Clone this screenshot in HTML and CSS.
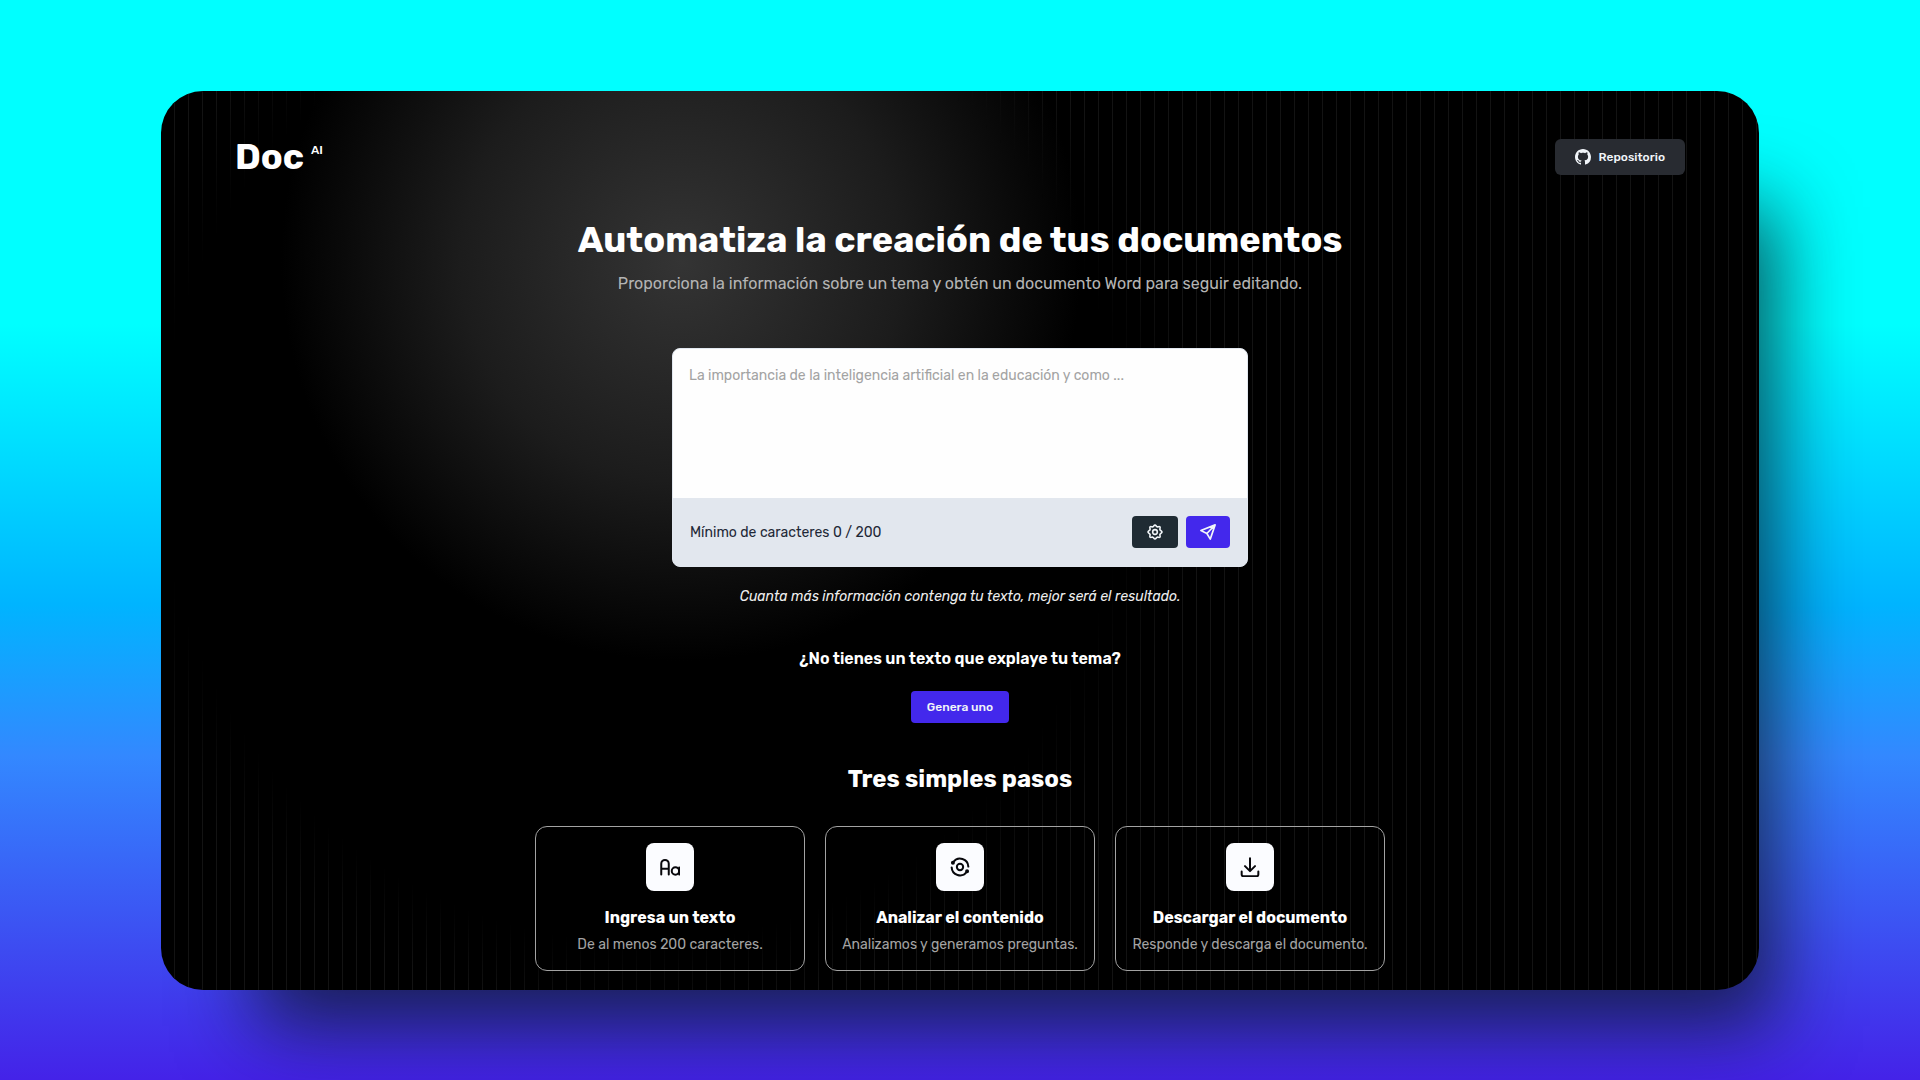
FILE: index.html
```html
<!DOCTYPE html>
<html lang="es">
<head>
<meta charset="utf-8">
<meta name="viewport" content="width=device-width, initial-scale=1">
<title>Doc AI</title>
<link rel="stylesheet" href="styles.css">
</head>
<body>
<div class="window">
  <header class="header">
    <a class="logo" href="#">Doc <sup class="logo-mark">AI</sup></a>
    <a class="repo" href="#">
      <svg class="repo-icon" viewBox="0 0 16 16" fill="currentColor" aria-hidden="true"><path d="M8 0C3.580 0 0 3.580 0 8c0 3.540 2.290 6.530 5.470 7.590.4.070.550-.170.550-.380 0-.190-.010-.820-.010-1.490-2.010.370-2.530-.490-2.690-.940-.090-.230-.480-.940-.820-1.130-.280-.150-.680-.520-.010-.530.630-.010 1.080.580 1.230.820.720 1.210 1.870.870 2.330.660.070-.520.280-.870.510-1.070-1.780-.2-3.640-.890-3.640-3.950 0-.870.310-1.590.820-2.150-.080-.2-.360-1.020.080-2.120 0 0 .670-.210 2.200.820.640-.180 1.320-.270 2-.270s1.360.090 2 .270c1.530-1.040 2.200-.820 2.200-.820.440 1.100.160 1.920.080 2.120.510.560.820 1.270.820 2.150 0 3.070-1.870 3.750-3.650 3.950.290.250.540.730.540 1.480 0 1.070-.010 1.930-.010 2.200 0 .210.150.460.550.380A8.010 8.010 0 0 0 16 8c0-4.420-3.580-8-8-8z"/></svg>
      Repositorio
    </a>
  </header>
  <main class="main">
    <h1 class="title">Automatiza la creación de tus documentos</h1>
    <p class="subtitle">Proporciona la información sobre un tema y obtén un documento Word para seguir editando.</p>
    <form class="composer">
      <textarea class="composer-text" aria-label="Texto" placeholder="La importancia de la inteligencia artificial en la educación y como ..."></textarea>
      <div class="composer-bar">
        <span class="composer-count">Mínimo de caracteres 0 / 200</span>
        <button class="button button-dark" type="button" aria-label="Ajustes">
          <svg class="icon-small" viewBox="0 0 24 24" fill="none" stroke="currentColor" stroke-width="2.400" stroke-linejoin="round" aria-hidden="true"><path d="M12 1.500c1.600 0 1.900 2.200 3.200 2.700s3.100-1.100 4.200 0-.5 2.900 0 4.200 3.100 2 3.100 3.600-2.600 2.300-3.100 3.600 1.100 3.100 0 4.200-2.900-.5-4.200 0-1.600 2.700-3.200 2.700-1.900-2.200-3.200-2.700-3.100 1.100-4.200 0 .5-2.900 0-4.200S1.500 13.600 1.500 12s2.600-2.300 3.100-3.600-1.100-3.100 0-4.200 2.900.5 4.200 0 1.600-2.700 3.200-2.700z"/><circle cx="12" cy="12" r="3.500"/></svg>
        </button>
        <button class="button button-primary" type="submit" aria-label="Enviar">
          <svg class="icon-large" viewBox="0 0 24 24" fill="none" stroke="currentColor" stroke-width="2.200" stroke-linecap="round" stroke-linejoin="round" aria-hidden="true"><path d="M21.500 2.500 2.500 10l8 4 4.500 7.500zM21.500 2.500 10.500 14"/></svg>
        </button>
      </div>
    </form>
    <p class="hint">Cuanta más información contenga tu texto, mejor será el resultado.</p>
    <h2 class="question">¿No tienes un texto que explaye tu tema?</h2>
    <button class="button button-primary button-generate" type="button">Genera uno</button>
    <h2 class="steps-title">Tres simples pasos</h2>
    <ul class="steps">
      <li class="step">
        <span class="step-icon"><svg class="icon" viewBox="0 0 24 24" fill="none" stroke="currentColor" stroke-width="2.400" stroke-linecap="round" stroke-linejoin="round" aria-hidden="true"><path d="M1.500 21V8a4.500 4.500 0 0 1 9 0v13M1.500 14h9M23 12.500V21"/><circle cx="18.500" cy="16.800" r="4.400"/></svg></span>
        <h3 class="step-title">Ingresa un texto</h3>
        <p class="step-text">De al menos 200 caracteres.</p>
      </li>
      <li class="step">
        <span class="step-icon"><svg class="icon" viewBox="0 0 24 24" fill="none" stroke="currentColor" stroke-width="2.400" stroke-linecap="round" aria-hidden="true"><circle cx="12" cy="12" r="3.800"/><path d="M4 6A10 10 0 0 1 22 11.500M20 18A10 10 0 0 1 2 12.500"/><circle cx="3.500" cy="7" r="1.200" fill="currentColor"/><circle cx="20.500" cy="17" r="1.200" fill="currentColor"/></svg></span>
        <h3 class="step-title">Analizar el contenido</h3>
        <p class="step-text">Analizamos y generamos preguntas.</p>
      </li>
      <li class="step">
        <span class="step-icon"><svg class="icon" viewBox="0 0 24 24" fill="none" stroke="currentColor" stroke-width="2.400" stroke-linecap="round" stroke-linejoin="round" aria-hidden="true"><path d="M12 1.500v15M6 11l6 6 6-6M2 17.500V21a2 2 0 0 0 2 2h16a2 2 0 0 0 2-2v-3.500"/></svg></span>
        <h3 class="step-title">Descargar el documento</h3>
        <p class="step-text">Responde y descarga el documento.</p>
      </li>
    </ul>
  </main>
</div>
</body>
</html>
```
FILE: styles.css
```css
* {
  box-sizing: border-box;
  margin: 0;
}

body {
  min-height: 100vh;
  padding: 91px 161px 90px;
  background: linear-gradient(#00ffff 30%, #00b4ff 56%, #3388ff 70%, #4422e8 100%);
  color: #ffffff;
  font-family: Rubik, Inter, Roboto, sans-serif;
}

.window {
  position: relative;
  isolation: isolate;
  padding: 48px 74px 19px;
  border-radius: 42px;
  background: radial-gradient(circle 400px at 520px 170px, #343434, #1c1c1c 55%, #000000) #000000;
  box-shadow: 56px 76px 80px -40px rgba(12, 18, 30, 0.75);
}

/* Vertical pinstripes, faded out around the glow */
.window::before {
  content: "";
  position: absolute;
  inset: 0;
  z-index: -1;
  border-radius: inherit;
  background: repeating-linear-gradient(90deg, transparent 0 13px, #131313 13px 14px);
  mask-image: radial-gradient(circle at 480px 370px, transparent 480px, #000000 560px);
}

.header {
  display: flex;
  align-items: center;
  justify-content: space-between;
  height: 36px;
}

.logo {
  display: flex;
  gap: 7px;
  color: inherit;
  font-size: 36px;
  font-weight: 700;
  line-height: 36px;
  text-decoration: none;
}

.logo-mark {
  font-size: 12px;
  font-weight: 500;
  line-height: 22px;
}

.repo {
  display: flex;
  align-items: center;
  gap: 8px;
  height: 36px;
  padding: 0 20px;
  border-radius: 6px;
  background: #282b31;
  color: #f1f5f9;
  font-size: 12px;
  font-weight: 500;
  text-decoration: none;
}

.repo-icon {
  width: 16px;
  height: 16px;
}

.main {
  display: flex;
  flex-direction: column;
  align-items: center;
  padding-top: 41px;
  text-align: center;
}

.title {
  font-size: 36px;
  font-weight: 700;
  line-height: 48px;
}

.subtitle {
  padding-top: 8px;
  color: #b4b4b4;
  font-size: 16px;
  line-height: 24px;
}

.composer {
  width: 576px;
  max-width: 100%;
  margin-top: 52px;
  overflow: hidden;
  border: 1px solid #e2e8f0;
  border-radius: 8px;
  background: #e2e7ee;
}

.composer-text {
  display: block;
  width: 100%;
  height: 149px;
  padding: 15px 16px;
  border: 0;
  outline: 0;
  resize: none;
  background: #fefefe;
  color: #1f2937;
  font: 14px/24px Rubik, Inter, Roboto, sans-serif;
}

.composer-text::placeholder {
  color: #a3a3a3;
}

.composer-bar {
  display: flex;
  align-items: center;
  gap: 8px;
  height: 68px;
  padding: 0 17px;
}

.composer-count {
  flex: 1;
  color: #1f2937;
  font-size: 14px;
  text-align: left;
}

.button {
  display: grid;
  place-items: center;
  height: 32px;
  padding: 0 13px;
  border: 0;
  border-radius: 4px;
  color: #f1f5f9;
  font: 500 12px/16px Rubik, Inter, Roboto, sans-serif;
}

.button-dark {
  padding: 0 15px;
  background: #1f2b33;
}

.button-primary {
  background: #4328ec;
}

.button-generate {
  padding: 0 16px;
}

.icon-small {
  width: 16px;
  height: 16px;
}

.icon-large {
  width: 18px;
  height: 18px;
}

.hint {
  margin-top: 18px;
  color: #eeeeee;
  font-size: 14px;
  font-style: italic;
  line-height: 24px;
}

.question {
  margin: 38px 0 20px;
  font-size: 16px;
  font-weight: 600;
  line-height: 24px;
}

.steps-title {
  margin: 40px 0 31px;
  font-size: 24px;
  font-weight: 700;
  line-height: 32px;
}

.steps {
  display: grid;
  grid-template-columns: repeat(3, 270px);
  gap: 20px;
  padding: 0;
  list-style: none;
}

.step {
  display: flex;
  flex-direction: column;
  align-items: center;
  padding: 16px 0 13px;
  border: 1px solid #a3a3a3;
  border-radius: 12px;
}

.step-icon {
  display: grid;
  place-items: center;
  width: 48px;
  height: 48px;
  border-radius: 8px;
  background: #fbfcff;
  color: #08080c;
}

.icon {
  width: 20px;
  height: 20px;
}

.step-title {
  margin-top: 15px;
  font-size: 16px;
  font-weight: 700;
  line-height: 24px;
}

.step-text {
  margin-top: 3px;
  color: #a3a3a3;
  font-size: 14px;
  line-height: 24px;
  white-space: nowrap;
}
```
